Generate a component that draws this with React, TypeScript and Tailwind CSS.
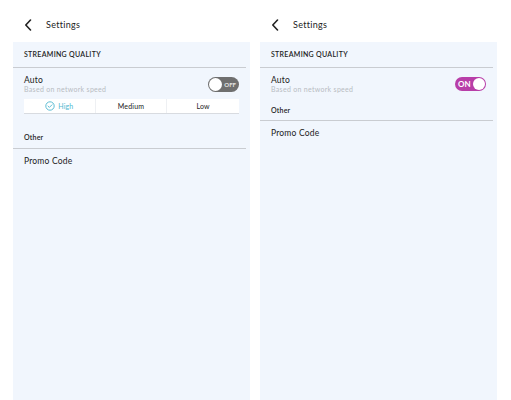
import React from "react";

const font = { fontFamily: "Lato, 'Noto Sans', sans-serif" };

function Header() {
  return (
    <div className="h-[42px] flex items-center pl-[11px] pt-[8px]">
      <svg width="8" height="12" viewBox="0 0 8 12" className="mr-[14px]">
        <path d="M6.5 1 L1.8 6 L6.5 11" fill="none" stroke="#222" strokeWidth="1.6" strokeLinecap="round" strokeLinejoin="round" />
      </svg>
      <span className="text-[9px] text-[#222] tracking-[0.3px]">Settings</span>
    </div>
  );
}

function Toggle({ on }: { on: boolean }) {
  if (on) {
    return (
      <div className="w-[31px] h-[14px] rounded-full bg-[#b83ea8] flex items-center justify-between pl-[3px] pr-[1px]">
        <span className="text-[8px] font-bold text-white leading-none">ON</span>
        <span className="w-[12px] h-[12px] rounded-full bg-white" />
      </div>
    );
  }
  return (
    <div className="w-[31px] h-[15px] rounded-full bg-[#6f6f6f] flex items-center justify-between pl-[1px] pr-[3px]">
      <span className="w-[13px] h-[13px] rounded-full bg-white" />
      <span className="text-[6px] font-bold text-[#e5e5e5] leading-none">OFF</span>
    </div>
  );
}

function Panel({ on }: { on: boolean }) {
  return (
    <div className="w-[237px] flex flex-col">
      <Header />
      <div className="flex-1 bg-[#f1f6fd] flex flex-col">
        <div className="pl-[11px] h-[25px] flex items-center text-[7px] font-semibold text-[#222] tracking-[0.3px]">
          STREAMING QUALITY
        </div>
        <div className="h-px bg-[#c9ccd1] mr-[4px]" />
        <div className="pl-[11px] pr-[11px] pt-[7px] flex items-start justify-between">
          <div className="flex flex-col">
            <span className="text-[8.5px] text-[#222] leading-[10px] tracking-[0.2px]">Auto</span>
            <span className="text-[7px] text-[#b8bcc2] leading-[9px] tracking-[0.3px]">Based on network speed</span>
          </div>
          <div className="mt-[2px]">
            <Toggle on={on} />
          </div>
        </div>
        {!on && (
          <div className="ml-[11px] mr-[11px] mt-[5px] bg-white h-[15px] border-b border-[#d8dbe0] grid grid-cols-3 text-[7px] tracking-[0.2px]">
            <div className="flex items-center justify-center gap-[3px] text-[#4fb7cf] border-r border-[#eef0f3]">
              <svg width="10" height="10" viewBox="0 0 10 10">
                <circle cx="5" cy="5" r="4.2" fill="none" stroke="#4fb7cf" strokeWidth="0.9" />
                <path d="M3 5.1 L4.4 6.4 L7 3.8" fill="none" stroke="#4fb7cf" strokeWidth="0.9" strokeLinecap="round" strokeLinejoin="round" />
              </svg>
              High
            </div>
            <div className="flex items-center justify-center text-[#222] border-r border-[#eef0f3]">Medium</div>
            <div className="flex items-center justify-center text-[#222]">Low</div>
          </div>
        )}
        <div className={`pl-[11px] ${on ? "h-[26px] pt-[6px]" : "h-[34px] pt-[12px]"} flex items-center text-[7px] font-semibold text-[#222] tracking-[0.2px]`}>
          Other
        </div>
        <div className="h-px bg-[#c9ccd1] mr-[4px]" />
        <div className="pl-[11px] pt-[6px] text-[8.5px] text-[#222] tracking-[0.2px]">Promo Code</div>
      </div>
    </div>
  );
}

export default function App() {
  return (
    <div className="w-[511px] h-[400px] bg-white flex pl-[13px] gap-[10px] overflow-hidden" style={font}>
      <Panel on={false} />
      <Panel on={true} />
    </div>
  );
}
